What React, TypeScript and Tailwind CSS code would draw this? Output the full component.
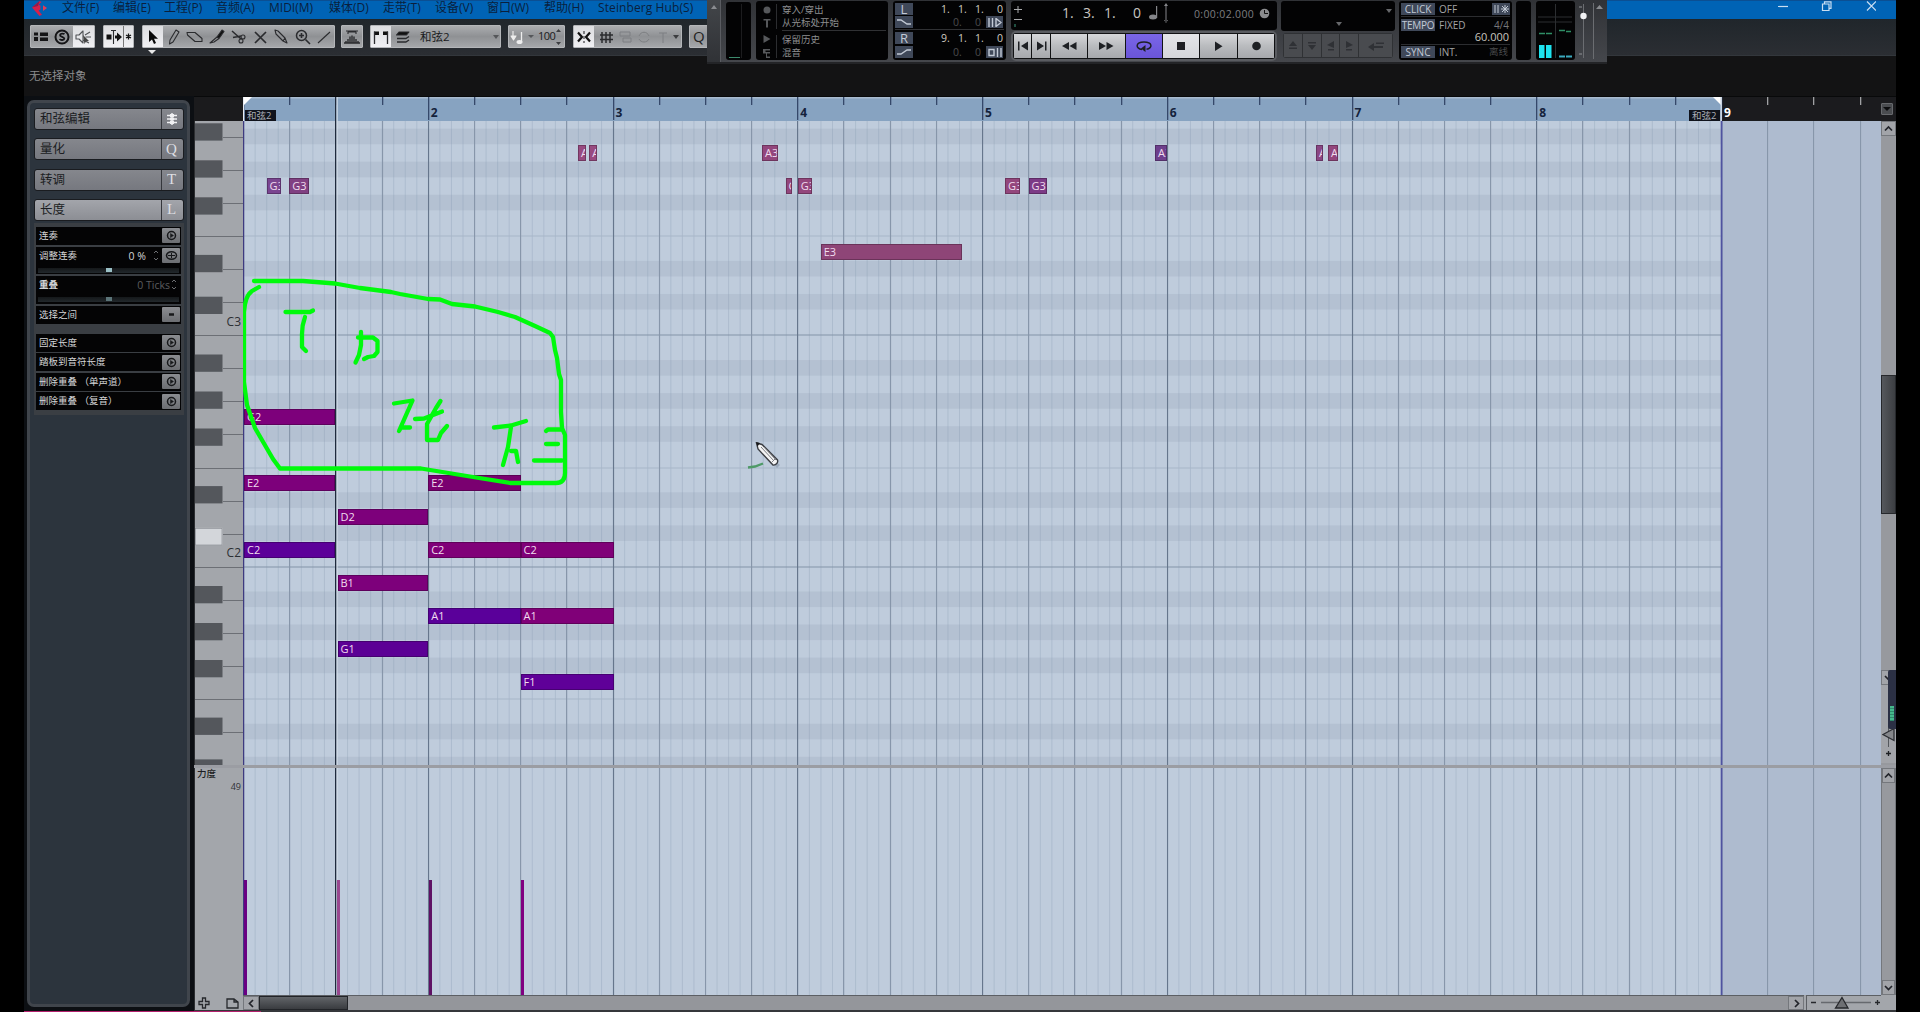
import React from "react";

const UI = "font-['Open_Sans','Noto_Sans_CJK_SC',sans-serif]";

/* ---------- geometry of the editor canvas ---------- */
const ORIGIN = 243;
const BAR = 184.75;
const END = BAR * 8 + 0.5;
const STEP = 33.06;
const TOP = 121;
const B_C_LINE = 335.3;

const DEGREES = ["C", "D", "E", "F", "G", "A", "B"];
const rowCenter = (name: string) => {
  const idx = DEGREES.indexOf(name[0]) + (Number(name[1]) - 3) * 7;
  return B_C_LINE - STEP / 2 - idx * STEP - TOP;
};

const quarters = Array.from({ length: 36 }, (_, i) => i);
const sixteenths = Array.from({ length: 128 }, (_, i) => i);

type Note = { p: string; x: number; e: number; c: string; t?: string };
const faded = "#93467c";
const notes: Note[] = [
  { p: "G3", x: 266.5, e: 281.3, c: "#7a4590" },
  { p: "G3", x: 289.3, e: 308.7, c: "#804082" },
  { p: "A3", x: 578, e: 585.8, c: "#984a80" },
  { p: "A3", x: 589.3, e: 597.3, c: "#984a80" },
  { p: "A3", x: 762, e: 777.8, c: faded },
  { p: "G3", x: 785.5, e: 792.3, c: faded },
  { p: "G3", x: 797.7, e: 811.8, c: faded },
  { p: "E3", x: 820.7, e: 962, c: "#8e4577" },
  { p: "G3", x: 1005, e: 1019.6, c: faded },
  { p: "G3", x: 1028.5, e: 1047, c: "#7c3a86" },
  { p: "A3", x: 1155, e: 1167, c: "#6e3f8c" },
  { p: "A3", x: 1316, e: 1322.6, c: "#8a4684" },
  { p: "A3", x: 1328, e: 1337.5, c: faded },
  { p: "G2", x: 244, e: 334.6, c: "#7d007b" },
  { p: "E2", x: 244, e: 334.6, c: "#7d007b" },
  { p: "C2", x: 244, e: 334.6, c: "#5c0099" },
  { p: "D2", x: 337.5, e: 428.2, c: "#7d007b" },
  { p: "B1", x: 337.5, e: 428.2, c: "#7d007b" },
  { p: "G1", x: 337.5, e: 428.2, c: "#5c0095" },
  { p: "E2", x: 428.2, e: 521, c: "#7a0070" },
  { p: "C2", x: 428.2, e: 521, c: "#800078" },
  { p: "C2", x: 520.5, e: 613.5, c: "#800078" },
  { p: "A1", x: 428.2, e: 521, c: "#5a009a" },
  { p: "A1", x: 520.5, e: 613.5, c: "#800078" },
  { p: "F1", x: 520.5, e: 613.5, c: "#5f0098" },
];

const blackRows: number[] = [];
for (let k = -14; k < 7; k++) {
  const d = ((k % 7) + 7) % 7;
  if (d !== 2 && d !== 6) blackRows.push(B_C_LINE - STEP * (k + 1) - TOP);
}

const blackKeys: number[] = [];
[123.3, 354.5, 586].forEach((b) => [0, 37, 74, 131.6, 173.4].forEach((o) => blackKeys.push(b + o - TOP)));
const keyLines = Array.from({ length: 20 }, (_, i) => i - 13).map((k) => ({
  y: B_C_LINE - STEP * k - TOP,
  full: ((k % 7) + 7) % 7 === 0 || ((k % 7) + 7) % 7 === 3,
  c: ((k % 7) + 7) % 7 === 0,
}));

function GridLines({ h, rows }: { h: number; rows?: boolean }) {
  return (
    <svg className="absolute inset-0" width="1638" height={h}>
      <rect width={END} height={h} fill="#bfccdc" />
      <rect x={END} width={1638 - END} height={h} fill="#aebbcf" />
      {rows && blackRows.map((y) => <rect key={y} x="0" y={y - 8.3} width={END} height="15.6" fill="#b4c1d2" />)}
      {sixteenths.map((i) => (
        <rect key={i} x={(BAR / 16) * i + 0.1} width="1" height={h} fill="#8497ae" opacity="0.3" />
      ))}
      {rows &&
        keyLines
          .filter((l) => l.full)
          .map((l) => <rect key={l.y} y={Math.round(l.y) - 0.5} width={END} height="1" fill={l.c ? "#8393a8" : "#a8b6c8"} />)}
      {quarters.map((i) => (
        <rect
          key={i}
          x={Math.round((BAR / 4) * i)}
          width={1.1}
          height={h}
          fill={i % 4 === 0 ? "#66768c" : "#8796aa"}
        />
      ))}
      <rect x="0" width="1.2" height={h} fill="#3d3a80" />
      <rect x={END - 0.8} width="1.8" height={h} fill="#4f53a0" />
      <rect x="92" width="1.4" height={h} fill="#1e2a3c" />
      <rect x="93.6" width="1" height={h} fill="#d6e0ea" />
    </svg>
  );
}

/* ---------- menu & tool bar ---------- */
const menu: [string, string][] = [
  ["文件(F)", "w-[51px]"],
  ["编辑(E)", "w-[51px]"],
  ["工程(P)", "w-[52px]"],
  ["音频(A)", "w-[53px]"],
  ["MIDI(M)", "w-[60px]"],
  ["媒体(D)", "w-[54px]"],
  ["走带(T)", "w-[52px]"],
  ["设备(V)", "w-[52px]"],
  ["窗口(W)", "w-[57px]"],
  ["帮助(H)", "w-[54px]"],
  ["Steinberg Hub(S)", "w-[110px] tracking-[0.1px]"],
];

function TitleBar() {
  return (
    <div className="flex h-[19px] items-start border-t border-[#0b4f93] bg-[#0063b5] text-[12px] leading-[14px] text-[#0a1f3d]">
      <div className="w-[38px] pl-[8px]">
        <svg width="16" height="16" viewBox="0 0 16 16">
          <path d="M7.5 0 0 6.500 7.500 15l2.500-1.200L6.600 9.500l1.800-1V4.600L6.600 3.800 9.500 1z" fill="#d6204a" />
          <path d="m11 4.200 4 2.800-4 3z" fill="#e23b55" />
          <path d="M0 6.500 7.500 0 6 5z" fill="#8e1c4c" />
        </svg>
      </div>
      {menu.map(([t, w]) => (
        <span key={t} className={`${w} shrink-0 whitespace-nowrap`}>
          {t}
        </span>
      ))}
      <div className="ml-auto flex items-center pr-[20px]">
        <svg width="102" height="13" fill="none" stroke="#c9def2" strokeWidth="1.2">
          <path d="M4 5.500h10" />
          <path d="M48.500 3h6.500v6.500h-6.500zM50.500 3V.8h6.500v6.500h-2" />
          <path d="m93 .5 9 9m0-9-9 9" />
        </svg>
      </div>
    </div>
  );
}

const groupCls = "flex h-[23px] shrink-0 items-center rounded-[1px] border border-[#b4b6b9] bg-gradient-to-b from-[#aaacaf] via-[#8f9194] to-[#a5a7aa]";
const litCls = "flex h-full items-center justify-center bg-gradient-to-b from-[#dcdde0] to-[#f0f0f3]";

function Cell({ lit, w = "w-[21.5px]", children }: { lit?: boolean; w?: string; children?: React.ReactNode }) {
  return <div className={`${w} shrink-0 ${lit ? litCls : "flex h-full items-center justify-center"}`}>{children}</div>;
}

function Ico({ children, w = 18, h = 18 }: { children: React.ReactNode; w?: number; h?: number }) {
  return (
    <svg width={w} height={h} viewBox={`0 0 ${w} ${h}`} fill="none" stroke="#2a2b2e" strokeWidth="1.1" strokeLinejoin="round" className="shrink-0">
      {children}
    </svg>
  );
}

function ToolBar() {
  return (
    <div className="flex h-[37px] items-start border-b border-[#33373c] bg-gradient-to-b from-[#20262b] to-[#2b2e33] pl-[6px] pt-[6px]">
      <div className={`${groupCls} w-[65px]`}>
        <Cell w="w-[20px]">
          <Ico>
            <path d="M2 4.500h4v3H2zM2 9h4v4H2zM8 4.500h8v3.500H8zM8 9.500h8V13H8z" fill="#141416" stroke="none" />
          </Ico>
        </Cell>
        <Cell>
          <Ico>
            <circle cx="9" cy="9" r="6.500" stroke="#141416" strokeWidth="2" />
            <path d="M11.500 6.200c-1-.9-4.300-1-4.500.8-.1 2 4.300 1.600 4.300 3.600-.2 1.800-3.700 1.700-4.800.6" stroke="#141416" strokeWidth="1.800" />
          </Ico>
        </Cell>
        <Cell lit>
          <Ico>
            <path d="M2 7h3l4-4v12l-4-4H2zM11 7l5-3M11.500 9H17M9 12l6 3" stroke="#515357" />
            <path d="m9 7 6 6-3 .4L10.500 16z" fill="#444" stroke="none" />
          </Ico>
        </Cell>
      </div>
      <div className={`${groupCls} ml-[8px] w-[31px] overflow-hidden`}>
        <Cell lit w="w-[19px]">
          <Ico>
            <path d="M1.500 6.500h5v5h-5zM10 7.500h2V4.500l5 4.500-5 4.500v-3h-2z" fill="#111" stroke="none" />
            <path d="M8.500 2v14M6 2.500h5" />
          </Ico>
        </Cell>
        <div className="h-full w-px bg-[#777]" />
        <Cell lit w="w-[9px]">
          <svg width="7" height="7" stroke="#111" strokeWidth="1.300">
            <path d="M3.500.5v6M1 2l5 3M6 2 1 5" />
          </svg>
        </Cell>
      </div>
      <div className={`${groupCls} relative ml-[8px] w-[193px]`}>
        <Cell lit w="w-[20px]">
          <Ico>
            <path d="M5 2v12l3-2.500L10 16l2-1-2-4.300h4z" fill="#0a0a0a" stroke="none" />
          </Ico>
        </Cell>
        <Cell>
          <Ico>
            <path d="m5 12 6-10 3 2-6 10-3.500 2z" />
          </Ico>
        </Cell>
        <Cell>
          <Ico>
            <path d="M1 4.500h8l7 6v3H9L1.500 7z" />
          </Ico>
        </Cell>
        <Cell>
          <Ico>
            <path d="m9 9 5-7 2 1.500-5 7z" fill="#111" />
            <path d="M9 9 2 15l4-1 5-3.500" />
          </Ico>
        </Cell>
        <Cell>
          <Ico>
            <path d="m3 3 9 8M4 9.500 12 8" strokeWidth="1.500" />
            <circle cx="14" cy="9" r="2" />
            <circle cx="12" cy="13" r="2" />
          </Ico>
        </Cell>
        <Cell>
          <Ico>
            <path d="m4 4 11 11M15 4 4 15" strokeWidth="1.700" />
          </Ico>
        </Cell>
        <Cell>
          <Ico>
            <path d="m3 2 3 1 7 7-2 3-7-7zM11 13l4 2-2-5" />
          </Ico>
        </Cell>
        <Cell>
          <Ico>
            <circle cx="7.500" cy="7.500" r="5" strokeWidth="1.500" />
            <path d="M5 7.500h5M7.500 5v5M11.500 11.500 16 16" strokeWidth="1.600" />
          </Ico>
        </Cell>
        <Cell w="w-[20px]">
          <Ico>
            <path d="M3 15 15 4" />
          </Ico>
        </Cell>
        <div className="absolute left-[5px] top-[24px] h-0 w-0 border-x-[4px] border-t-[4px] border-x-transparent border-t-[#e8e8e8]" />
      </div>
      <div className={`${groupCls} ml-[6px] w-[22px]`}>
        <Ico w={20} h={18}>
          <path d="M4 3h12M6 6V4h8v2" />
          <path d="M2 15h16M4 15v-2M6 15v-4M8 15V8.500M10 15V7.500M12 15V8.500M14 15v-4M16 15v-2" strokeWidth="1.400" />
        </Ico>
      </div>
      <div className={`${groupCls} ml-[7px] w-[131px]`}>
        <Cell lit w="w-[20px]">
          <Ico>
            <path d="M2 3.500h5v3.500H2zm9 0h5v3.500h-5z" fill="#111" stroke="none" />
            <path d="M2.500 3.500V16M15.500 3.500V16" strokeWidth="1.300" />
          </Ico>
        </Cell>
        <Cell w="w-[23px]">
          <Ico>
            <path d="M5 4h10l-2.500 3H2.500z" fill="#111" />
            <path d="M3 10.500h9l3-2M3 14h9l3-2" strokeWidth="1.500" />
          </Ico>
        </Cell>
        <span className="pl-[6px] text-[11.5px] text-[#1a1b1d]">和弦2</span>
        <div className="ml-auto mr-px h-0 w-0 border-x-[3px] border-t-[4px] border-x-transparent border-t-[#55575a]" />
      </div>
      <div className={`${groupCls} ml-[7px] w-[57px]`}>
        <Ico w={18} h={18}>
          <path d="M4 3v7M2 8l2.500 4L7 8z" stroke="#eee" fill="#eee" />
          <path d="M12.500 4v10" stroke="#eee" strokeWidth="1.300" />
          <ellipse cx="10.500" cy="14" rx="3" ry="2" fill="#eee" stroke="none" />
        </Ico>
        <div className="ml-px h-0 w-0 border-x-[3px] border-t-[3px] border-x-transparent border-t-[#55575a]" />
        <span className="ml-[4px] text-[11px] tracking-[-0.5px] text-[#1a1b1d]">100</span>
        <svg width="5" height="18" className="ml-px shrink-0" fill="#3c3d40">
          <path d="M0 4h5L2.500 1zM0 14h5l-2.500 3z" />
        </svg>
      </div>
      <div className={`${groupCls} ml-[8px] w-[109px]`}>
        <Cell lit w="w-[20px]">
          <Ico>
            <path d="m3 4.500 4 4.500-4 4.500M15 4.500 11 9l4 4.500" strokeWidth="2.200" stroke="#111" />
            <path d="M9 3v12" strokeDasharray="3 2" />
          </Ico>
        </Cell>
        <Cell w="w-[24px]">
          <Ico>
            <path d="M5 4v11M9 4v11M13 4v11M3 7h13M3 11.500h13" strokeWidth="1.500" />
          </Ico>
        </Cell>
        <svg width="50" height="18" fill="none" stroke="#7d7f82">
          <path d="M2 4h10v4H2zM5 10h8v4H5zM21 8c2-5 8-5 10 0M31 11c-2 4-8 4-10 0M41 5h8M45 5v10" />
        </svg>
        <div className="ml-auto mr-[2px] h-0 w-0 border-x-[3px] border-t-[4px] border-x-transparent border-t-[#3c3d40]" />
      </div>
      <div className={`${groupCls} ml-[7px] w-[22px] pl-[3px] text-[15px] leading-none text-[#222]`}>Q</div>
    </div>
  );
}

/* ---------- floating transport ---------- */
const well = "rounded-[3px] bg-[#030304]";
const tag = "flex items-center justify-center bg-[#3f4859] text-[#c3cad6]";

function Digits({ v, dim, children }: { v: string[]; dim?: boolean; children?: React.ReactNode }) {
  return (
    <div className={`flex flex-1 items-center justify-end text-[10.5px] leading-[12px] ${dim ? "pr-px text-[#4b4c4e]" : "pr-px text-[#d0ccc2]"}`}>
      {v.map((d, i) => (
        <span key={i} className={i === v.length - 1 ? "ml-[5px]" : "w-[17px]"}>
          {d}
        </span>
      ))}
      {children}
    </div>
  );
}

function TBtn({ w, cls, children }: { w: string; cls?: string; children: React.ReactNode }) {
  return (
    <div className={`${w} flex h-full items-center justify-center ${cls ?? "bg-gradient-to-b from-[#d6d7da] via-[#b9bbbe] to-[#a6a8ac]"}`}>
      <svg width="16" height="16" viewBox="0 0 16 16" fill="#1e2024" className="shrink-0">
        {children}
      </svg>
    </div>
  );
}

function Transport() {
  return (
    <div className="absolute left-[707px] top-0 flex h-[64px] w-[900px] border-b-2 border-[#232427] bg-gradient-to-b from-[#303236] to-[#45474c]">
      <div className="flex h-full w-[14px] justify-center border-r border-[#5a5c61] bg-gradient-to-b from-[#43464a] to-[#303236] pt-[5px]">
        <div className="h-0 w-0 border-x-[3px] border-b-[4px] border-x-transparent border-b-[#8a8c90]" />
      </div>
      <div className={`${well} ml-[5px] mt-[2px] flex h-[58px] w-[25px] items-end p-[2px]`}>
        <div className="mb-0 ml-px h-px w-[11px] bg-[#3c8a6c]" />
        <div className="ml-[1px] h-full w-px bg-[#1c1c1e]" />
      </div>
      <div className={`${well} ml-[5px] mt-[1px] flex h-[59px] w-[132px] text-[9.5px] leading-[13px] text-[#8d8e90]`}>
        <svg width="21" height="59" fill="#56585b">
          <circle cx="11" cy="9" r="3.500" />
          <path d="M7.500 18h7v1.500h-2.500v7h-2v-7h-2.500z M7.500 34l7 4-7 4zM7 48h7v1.500H9.500V51H14v1.500h-3v3h3V57h-4v-4.500H7z" />
          <path d="M20.500 3v25M20.500 34v23" stroke="#2c2d30" />
        </svg>
        <div className="flex flex-1 flex-col pl-[5px] pt-[2px]">
          <span>穿入/穿出</span>
          <span>从光标处开始</span>
          <div className="mb-[2px] mt-px h-px w-[104px] bg-[#303134]" />
          <span>保留历史</span>
          <span>混音</span>
        </div>
      </div>
      <div className={`${well} ml-[5px] mt-[1px] flex h-[59px] w-[113px] flex-col px-[2px] pt-[2px]`}>
        <div className="flex h-[12px]">
          <div className={`${tag} w-[18px] text-[13px] leading-none`}>L</div>
          <Digits v={["1.", "1.", "1.", "0"]} />
        </div>
        <div className="mt-[1px] flex h-[12px]">
          <div className={`${tag} w-[18px]`}>
            <svg width="14" height="8" fill="none" stroke="#c3cad6" strokeWidth="1.300">
              <path d="M0 2h4l6 4h4" />
            </svg>
          </div>
          <Digits v={["0.", "0"]} dim>
            <div className="ml-[5px] flex h-[12px] w-[17px] items-center justify-center bg-[#3f4859]">
              <svg width="14" height="9" fill="none" stroke="#c3cad6" strokeWidth="1.400">
                <path d="M1 0v9M4.500 0v9M8 .5v8l5-4z" />
              </svg>
            </div>
          </Digits>
        </div>
        <div className="my-[1px] h-px bg-[#303134]" />
        <div className="mt-[1px] flex h-[12px]">
          <div className={`${tag} w-[18px] text-[13px] leading-none`}>R</div>
          <Digits v={["9.", "1.", "1.", "0"]} />
        </div>
        <div className="mt-[2px] flex h-[12px]">
          <div className={`${tag} w-[18px]`}>
            <svg width="14" height="8" fill="none" stroke="#c3cad6" strokeWidth="1.300">
              <path d="M0 6h4l6-4h4" />
            </svg>
          </div>
          <Digits v={["0.", "0"]} dim>
            <div className="ml-[5px] flex h-[12px] w-[17px] items-center justify-center bg-[#3f4859]">
              <svg width="14" height="9" fill="none" stroke="#c3cad6" strokeWidth="1.400">
                <path d="M1 1.500h5v6H1zM9.500 0v9M13 0v9" />
              </svg>
            </div>
          </Digits>
        </div>
      </div>
      <div className="ml-[5px] mt-[1px] flex w-[266px] flex-col">
        <div className={`${well} flex h-[29px] items-start text-[#c9c7c2]`}>
          <svg width="14" height="29" stroke="#a9aaac" fill="none">
            <path d="M3 8.500h8M7 5v7M3 18.500h8" />
            <path d="M4 23v3" stroke="#3c9a7c" />
          </svg>
          <div className="flex pl-[37px] pt-[3px] text-[14px] leading-[18px]">
            <span className="w-[21px]">1.</span>
            <span className="w-[21px]">3.</span>
            <span className="w-[29px]">1.</span>
            <span>0</span>
          </div>
          <svg width="24" height="24" className="ml-[7px] shrink-0" fill="#85868a">
            <ellipse cx="5" cy="16" rx="4" ry="2.500" />
            <path d="M8 5h1.200v12H8zM17.500 3v18h1V3zM16 5h4l-2-3zM16 19h4l-2 3z" />
          </svg>
          <span className="ml-[22px] pt-[6px] text-[10.5px] leading-[14px] tracking-[0.35px] text-[#7d7e80]">0:00:02.000</span>
          <svg width="11" height="11" className="ml-[5px] mt-[7px] shrink-0">
            <circle cx="5.500" cy="5.500" r="4.800" fill="#8b8c8e" />
            <path d="M5.500 2v3.500H9" stroke="#111" fill="none" />
          </svg>
        </div>
        <div className="mt-[1px] flex h-[30px] items-center gap-px rounded-[5px] border-2 border-[#5a5c61] bg-[#111214] p-[1px]">
          <TBtn w="w-[17px]">
            <path d="M3 3.500h1.500v9H3zM13 3.500v9L6 8z" />
          </TBtn>
          <TBtn w="w-[18px]">
            <path d="M12 3.500h1.500v9H12zM4 3.500v9L11 8z" />
          </TBtn>
          <TBtn w="flex-1">
            <path d="M8 4v8L1 8zM15.500 4v8l-7-4z" />
          </TBtn>
          <TBtn w="flex-1">
            <path d="M1 4v8l7-4zM8.500 4v8l7-4z" />
          </TBtn>
          <TBtn w="flex-1" cls="bg-gradient-to-b from-[#7a66e8] to-[#6a55d8]">
            <path d="M6 11.500C-1 10.500-.5 4 8 4s9 6 2.500 7.300" fill="none" stroke="#1e2024" strokeWidth="1.500" />
            <path d="M9.500 7v7L5 10.500z" />
          </TBtn>
          <TBtn w="flex-1" cls="bg-gradient-to-b from-[#e4e5e8] to-[#d5d6da]">
            <path d="M4 4h8v8H4z" />
          </TBtn>
          <TBtn w="flex-1">
            <path d="M5 3.500v9.500l7.500-4.700z" />
          </TBtn>
          <TBtn w="flex-1">
            <circle cx="8.500" cy="8" r="4.300" />
          </TBtn>
        </div>
      </div>
      <div className="ml-[4px] mt-[1px] flex w-[114px] flex-col">
        <div className={`${well} relative h-[30px]`}>
          <div className="absolute left-[55px] top-[21px] h-0 w-0 border-x-[3px] border-t-[4px] border-x-transparent border-t-[#66686b]" />
          <div className="absolute left-[105px] top-[8px] h-0 w-0 border-x-[3px] border-t-[4px] border-x-transparent border-t-[#66686b]" />
        </div>
        <div className="ml-[2px] mt-[2px] flex h-[25px] w-[110px] gap-px rounded-[3px] bg-[#2f3134] p-px">
          <TBtn w="w-[18px]" cls="bg-[#494b4f]">
            <path d="M4 8h8L8 3zM4 9.500h8V11H4z" opacity=".6" />
          </TBtn>
          <TBtn w="w-[18px]" cls="bg-[#494b4f]">
            <path d="M4 4h8v1.500H4zM4 7h8l-4 5z" opacity=".6" />
          </TBtn>
          <TBtn w="w-[18px]" cls="bg-[#494b4f]">
            <path d="M11 3v7L4 7zM5 11h6v1.500H5z" opacity=".6" />
          </TBtn>
          <TBtn w="w-[18px]" cls="bg-[#494b4f]">
            <path d="M5 3v7l7-3zM5 11h6v1.500H5z" opacity=".6" />
          </TBtn>
          <TBtn w="w-[33px]" cls="bg-[#494b4f]">
            <path d="M0 9l6-4v3h9v2H6v3zM8 4.500h8V6H8z" opacity=".6" />
          </TBtn>
        </div>
      </div>
      <div className={`${well} ml-[4px] mt-[1px] flex h-[59px] w-[113px] flex-col px-[2px] pt-[1px] text-[10px] leading-[12px] text-[#a3a4a6]`}>
        <div className="flex h-[13px] items-center">
          <div className={`${tag} h-[12px] w-[34px]`}>CLICK</div>
          <span className="pl-[4px]">OFF</span>
          <div className="ml-auto flex h-[12px] w-[18px] items-center justify-center bg-[#3f4859]">
            <svg width="16" height="10" stroke="#c3cad6" fill="#c3cad6">
              <path d="M2 1v8M5 1v8M8 5h8M12 1v8M9 2l6 6M15 2 9 8" />
            </svg>
          </div>
        </div>
        <div className="mt-px h-px bg-[#2c2d30]" />
        <div className="mt-px flex h-[13px] items-center">
          <div className={`${tag} h-[12px] w-[34px] tracking-[-0.3px]`}>TEMPO</div>
          <span className="pl-[4px]">FIXED</span>
          <span className="ml-auto pr-[1px] text-[#77787a]">4/4</span>
        </div>
        <div className="h-[12px] pr-[1px] text-right text-[11px] leading-[11px] text-[#c6c4be]">60.000</div>
        <div className="mt-px h-px bg-[#2c2d30]" />
        <div className="mt-px flex h-[12px] items-center">
          <div className={`${tag} h-[12px] w-[34px]`}>SYNC</div>
          <span className="pl-[4px]">INT.</span>
          <span className="ml-auto pr-[2px] text-[9.500px] text-[#48494b]">离线</span>
        </div>
      </div>
      <div className={`${well} ml-[4px] mt-[1px] h-[59px] w-[15px]`} />
      <div className={`${well} ml-[5px] mt-[1px] h-[59px] w-[39px]`}>
        <svg width="39" height="59">
          <path d="M19.500 3v54M2 16h34M2 21h34" stroke="#2c2e31" />
          <path d="M3 32.500h6M10 32.500h6M23 29.500h6M30 30.500h5" stroke="#2f8f66" strokeWidth="1.500" />
          <path d="M3 44h5.500v13H3zM10 44h5.500v13H10z" fill="#1ee3ef" />
          <path d="M23 55.500h6M30 55.500h6" stroke="#3aa9bd" strokeWidth="2" />
        </svg>
      </div>
      <svg width="32" height="62" className="shrink-0">
        <path d="M8.500 4v54M18.500 3v56" stroke="#6b6d71" />
        <path d="M4 7h3M4 54h3" stroke="#909296" />
        <circle cx="8.500" cy="16" r="3.200" fill="#f2f2f4" />
        <path d="M21 9h7l-3.500-4z" fill="#8a8c90" />
      </svg>
    </div>
  );
}

/* ---------- inspector ---------- */
function Header({ t, active, children }: { t: string; active?: boolean; children: React.ReactNode }) {
  return (
    <div
      className={`flex h-[22px] items-center rounded-[3px] border border-[#1a1c20] bg-gradient-to-b ${
        active ? "from-[#a3a5ab] to-[#8c8e94]" : "from-[#85878d] to-[#76787f]"
      }`}
    >
      <span className="flex-1 pl-[5px] text-[12.5px] leading-[20px] text-[#1b1d22]">{t}</span>
      <div className="flex h-full w-[22px] items-center justify-center border-l border-[#35373c] pr-[2px] font-['Liberation_Serif'] text-[15px] leading-none text-[#dedfe3]">
        {children}
      </div>
    </div>
  );
}

const SquareBtn = ({ kind }: { kind: "play" | "eye" | "minus" }) => (
  <div className="ml-auto flex h-[15px] w-[18px] items-center justify-center rounded-[1px] bg-gradient-to-b from-[#8b8d91] to-[#6c6e72]">
    <svg width="13" height="11" fill="none" stroke="#17181a" strokeWidth="1.500">
      {kind === "play" && (
        <>
          <circle cx="6.500" cy="5.500" r="4" />
          <path d="M5.500 3.500v4l3-2z" fill="#17181a" strokeWidth=".5" />
        </>
      )}
      {kind === "eye" && (
        <>
          <ellipse cx="6.500" cy="5.500" rx="5" ry="3.800" />
          <path d="M3 5.500h7M6.500 3v5" strokeWidth="1" />
        </>
      )}
      {kind === "minus" && <path d="M4 5.500h5" strokeWidth="2.500" />}
    </svg>
  </div>
);

function Slider({ dim }: { dim?: boolean }) {
  return (
    <div className="mx-[2px] mt-[3px] flex h-[5px] items-center justify-center bg-[linear-gradient(#15181a,#22282c)]">
      <div className={`h-[4px] w-[6px] ${dim ? "bg-[#5b7478]" : "bg-[#9bc0c6]"}`} />
    </div>
  );
}

const Spin = () => (
  <svg width="6" height="13" fill="none" stroke="#6d6f72" className="mr-[3px] shrink-0">
    <path d="M1 4l2-2 2 2M1 9l2 2 2-2" />
  </svg>
);

const rowCls = "flex items-center bg-[#040405] pl-[3px] pr-[1px] text-[9.500px] leading-[14px] text-[#d4d5d7]";

function Inspector() {
  return (
    <div className="h-[916px] w-[170px] bg-[#0c0f13] pl-[3px] pt-[4px]">
      <div className="h-[907px] w-[163px] rounded-[7px] border-[3px] border-[#40454c] bg-[#2c343d] pl-[4px] pr-[3px] pt-[5px]">
        <div className="flex flex-col gap-[8.300px]">
          <Header t="和弦编辑">
            <svg width="12" height="14" stroke="#f0f0f2" strokeWidth="1.500">
              <path d="M1 3.500h10M1 7h10M1 10.500h10M6 1v12" />
              <path d="M4 3.500h4M4 7h4M4 10.500h4" strokeWidth="3" />
            </svg>
          </Header>
          <Header t="量化">Q</Header>
          <Header t="转调">T</Header>
          <Header t="长度" active>
            L
          </Header>
        </div>
        <div className="mt-[2px] h-[192px] bg-[#3a3e43] pl-[2px] pr-[3px] pt-[4px]">
          <div className="flex flex-col gap-[2px]">
            <div className={`${rowCls} h-[18px]`}>
              连奏
              <SquareBtn kind="play" />
            </div>
            <div className="h-[27px] bg-[#040405]">
              <div className={`${rowCls} h-[18px]`}>
                <span className="flex-1">调整连奏</span>
                <span className="mr-[7px] text-[10.500px]">0 %</span>
                <Spin />
                <div>
                  <SquareBtn kind="eye" />
                </div>
              </div>
              <Slider />
            </div>
            <div className="h-[28px] bg-[#040405]">
              <div className={`${rowCls} h-[18px]`}>
                <span className="flex-1 font-bold">重叠</span>
                <span className="mr-px text-[10.500px] text-[#5b5c5f]">0 Ticks</span>
                <Spin />
              </div>
              <Slider dim />
            </div>
            <div className={`${rowCls} h-[18px]`}>
              选择之间
              <SquareBtn kind="minus" />
            </div>
          </div>
          <div className="mt-[10px] flex flex-col gap-[1.500px]">
            {["固定长度", "踏板到音符长度", "删除重叠 （单声道）", "删除重叠 （复音）"].map((t) => (
              <div key={t} className={`${rowCls} h-[18px]`}>
                {t}
                <SquareBtn kind="play" />
              </div>
            ))}
          </div>
        </div>
      </div>
    </div>
  );
}

/* ---------- editor ---------- */
function Ruler() {
  return (
    <div className="flex h-[25px] border-t border-[#08090a]">
      <div className="w-[49px] bg-[#1b1b1d]" />
      <div className="relative w-[1638px] overflow-hidden bg-[#1b1b1e]">
        <svg className="absolute inset-0" width="1638" height="24">
          <rect width={END} height="24" fill="#87a3c1" />
          <rect width={END} height="1.500" fill="#a9bbcf" />
          {quarters.map((i) => (
            <rect
              key={i}
              x={Math.round((BAR / 4) * i)}
              width="1.300"
              height={i % 4 === 0 ? 23 : 8}
              fill={i > 32 ? "#a0a1a4" : "#35486a"}
            />
          ))}
          <path d="M1 0h8L1 8zM1478 0h-8l8 8z" fill="#fff" />
          <rect x="92" width="1.400" height="24" fill="#1e2a3c" />
          <rect x="93.500" width="1.200" height="24" fill="#d6e0ea" />
          <rect x="0" width="1" height="24" fill="#e8edf3" />
          <rect x="1477.500" width="1.500" height="24" fill="#c9d3e0" />
        </svg>
        {[2, 3, 4, 5, 6, 7, 8, 9].map((n) => (
          <span
            key={n}
            className={`absolute top-[9px] text-[12px] font-bold leading-[14px] ${n === 9 ? "text-white" : "text-[#14223c]"}`}
            style={{ left: BAR * (n - 1) + 3 }}
          >
            {n}
          </span>
        ))}
        <span className="absolute left-[2px] top-[13px] h-[11px] w-[31px] bg-[#10131c] pl-[2px] text-[9.500px] leading-[11px] text-[#a9adb6]">和弦2</span>
        <span className="absolute left-[1446px] top-[13px] h-[11px] w-[31px] bg-[#10131c] pl-[3px] text-[9.500px] leading-[11px] text-[#a9adb6]">和弦2</span>
      </div>
      <div className="flex w-[15px] items-center bg-[#1b1b1e]">
        <div className="flex h-[12px] w-[12px] items-center justify-center rounded-[1px] border border-[#67696d] bg-[#4a4c50]">
          <div className="h-0 w-0 border-x-[4px] border-t-[4px] border-x-transparent border-t-[#0c0c0e]" />
        </div>
      </div>
    </div>
  );
}

function Keyboard() {
  return (
    <div className="relative h-[644px] w-[49px] overflow-hidden border-l border-[#2c2e31] bg-[#a3a6ab]">
      <svg className="absolute inset-0" width="48" height="644">
        {keyLines.map((l) => (
          <rect key={l.y} x={l.full ? 0 : 28} y={Math.round(l.y)} width="48" height="1" fill="#6c6f75" />
        ))}
        {blackKeys.map((y, i) => (
          <rect key={y} x="0" y={y} width="27.500" height="17.300" fill={i === 9 ? "#d3d6da" : "#54575c"} />
        ))}
        <rect x=".5" y="407.500" width="26.500" height="16.500" fill="none" stroke="#80838a" strokeWidth=".6" />
      </svg>
      <span className="absolute right-[2px] top-[193px] text-[12px] leading-[16px] text-[#2c2f34]">C3</span>
      <span className="absolute right-[2px] top-[424px] text-[12px] leading-[16px] text-[#2c2f34]">C2</span>
    </div>
  );
}

const ArrowBtn = ({ d, size = "h-[15px] w-[15px]" }: { d: string; size?: string }) => (
  <div className={`${size} flex shrink-0 items-center justify-center border border-[#74777c] bg-[#a2a4a9]`}>
    <svg width="9" height="9" fill="none" stroke="#22242a" strokeWidth="1.700">
      <path d={d} />
    </svg>
  </div>
);
const UP = "M1 6.500 4.500 3 8 6.500";
const DOWN = "M1 3 4.500 6.500 8 3";

const strokes = [
  "M254 281 303 281 335 283.500 360 288 391 292 400 294 428 299 440 299.500 452 304 475 306.500 498 312 515 317 535 326 550 333 553 337 555 350 557 358 559 374 561 380V412L562 428 565 435V473Q565 483 556 483H510L473 477 421 468.500H280L273 459 255 428 247 405 244 382V312Q245 296 252 291L259 287",
  "M285.500 312H310L313 310.500M305 317Q302 325 302 334V347L306 351",
  "M361 332V345L359 355 355.500 362.500M358 337.500H373L377.500 341V352L374 356 368 357 364 359",
  "M394 403.500 412.500 400.500 399 431 401 427.500H410",
  "M415 419 424 418.500 442 411.500M440.500 401 436 408 427 424 427 440H438L441 433 447 426",
  "M494 427.500 511 425.500 526 421M511 427 508 447 503 465M511 451 516 451 518 462",
  "M546 431 548 429.500H561M546 444H558M534 460.500H562",
];

function RollCanvas() {
  return (
    <div className="relative h-[644px] w-[1638px] overflow-hidden">
      <GridLines h={644} rows />
      {notes.map((n, i) => (
        <div
          key={i}
          className="absolute h-[16px] overflow-hidden whitespace-nowrap border border-black/25 pl-[2px] text-[11px] leading-[14px] text-[#f0dcee]"
          style={{ left: n.x - ORIGIN, width: n.e - n.x, top: rowCenter(n.p) - 8.6, backgroundColor: n.c }}
        >
          {n.p}
        </div>
      ))}
      <svg className="absolute inset-0" width="1638" height="644" viewBox="243 121 1638 644">
        <g fill="none" stroke="#00fa0c" strokeWidth="4.300" strokeLinecap="round" strokeLinejoin="round">
          {strokes.map((d) => (
            <path key={d} d={d} />
          ))}
        </g>
        <path d="M748 467.500 755 466.500 763 463.500" stroke="#4f9a68" strokeWidth="2.400" fill="none" />
        <path d="m762 450 18 15-3 3z" fill="#7d8ba0" opacity=".5" />
        <path d="m756.500 443 5.500 1.500 15.500 15.500c1 3-2 5.500-4.500 5L758 449z" fill="#f4f4f4" stroke="#3b3d42" strokeWidth="1.400" />
        <path d="m761 447 13 14M764 447 776 460M770.500 463.500l5-5" stroke="#7b7d82" strokeWidth="1" />
        <path d="m756 442 4 1-2.500 3.500z" fill="#17181a" />
      </svg>
    </div>
  );
}

const velocity = [
  { x: 1, c: "#6a0082" },
  { x: 94, c: "#98488f" },
  { x: 185.5, c: "#5e1164" },
  { x: 278, c: "#800080" },
];

function Editor() {
  return (
    <div className="w-[1702px]">
      <Ruler />
      <div className="flex h-[644px]">
        <Keyboard />
        <RollCanvas />
        <div className="relative flex w-[15px] flex-col bg-[#97999e]">
          <ArrowBtn d={UP} />
          <div className="mt-[239px] h-[139px] border border-[#26282c] bg-gradient-to-r from-[#55585d] to-[#3c3e42]" />
          <div className="mt-[156px]">
            <ArrowBtn d={DOWN} />
          </div>
          <div className="relative flex h-[78px] flex-col items-center bg-[#a2a4a9]">
            <div className="h-[62px] w-px bg-[#55585d]" />
            <svg width="7" height="7" className="mt-[3px]" stroke="#1d1f23" strokeWidth="1.300">
              <path d="M3.500 1v5M1 3.500h5" />
            </svg>
            <svg className="absolute left-[1px] top-[42px]" width="14" height="15">
              <path d="M1 7.500 12 1.500v12z" fill="#85878b" stroke="#2c2e33" strokeWidth="1.300" />
            </svg>
          </div>
          <div className="absolute bottom-[36px] right-0 flex h-[59px] w-[8px] items-end rounded-l-[2px] bg-[#2b3044] pb-[8px] pl-[2px]">
            <div className="h-[15px] w-[4px] bg-[repeating-linear-gradient(#45b88c_0_2px,#2f8a6c_2px_3px)]" />
          </div>
        </div>
      </div>
      <div className="h-[3px] bg-[#9b9da3]" />
      <div className="flex h-[227px]">
        <div className="relative w-[49px] border-l border-[#2c2e31] bg-[#a3a6ab]">
          <span className="absolute left-[2px] top-0 text-[9.500px] font-medium leading-[12px] text-[#1c1e22]">力度</span>
          <span className="absolute right-[2px] top-[13px] text-[9px] leading-[11px] text-[#303338]">49</span>
        </div>
        <div className="relative w-[1638px] overflow-hidden">
          <GridLines h={227} />
          {velocity.map((v) => (
            <div key={v.x} className="absolute bottom-0 h-[115px] w-[3px]" style={{ left: v.x, backgroundColor: v.c }} />
          ))}
        </div>
        <div className="flex w-[15px] flex-col justify-between border-x border-[#74777c] bg-[#97999e]">
          <ArrowBtn d={UP} size="h-[15px] w-[13px]" />
          <ArrowBtn d={DOWN} size="h-[15px] w-[13px]" />
        </div>
      </div>
      <div className="relative flex h-[17px] border-b-2 border-[#35373b] bg-[#a3a6ab]">
        <div className="flex w-[49px] items-center border-l border-[#2c2e31]">
          <svg width="48" height="14" fill="none" stroke="#26282c" strokeWidth="1.300">
            <path d="M7.500 2h3v3.500H14v3h-3.500V12h-3V8.500H4v-3h3.500zM32 3h7l4 3v6H32zM39 3v3h4" />
          </svg>
        </div>
        <div className="flex w-[1561px] border-t border-[#5c5f64] bg-[#94969b]">
          <ArrowBtn d="M6 1 2.500 4.500 6 8" size="h-[14px] w-[16px]" />
          <div className="h-[14px] w-[89px] border border-[#222428] bg-gradient-to-b from-[#626569] to-[#3a3c40]" />
          <div className="ml-auto">
            <ArrowBtn d="M3 1 6.500 4.500 3 8" size="h-[14px] w-[16px]" />
          </div>
        </div>
        <div className="ml-[2px] flex w-[75px] items-center border-l border-t border-[#5c5f64]">
          <svg width="75" height="14" fill="none" stroke="#26282c" strokeWidth="1.300">
            <path d="M4 6.500h5M68 6.500h5M70.500 4v5" />
            <path d="M14 6.500h50" stroke="#66696e" />
            <path d="M35 1.500 41 12H28.500z" fill="#6d6f73" />
          </svg>
        </div>
      </div>
    </div>
  );
}

export default function App() {
  return (
    <div className={`relative h-[1012px] w-[1920px] overflow-hidden bg-black ${UI}`}>
      <div className="ml-[24px] w-[1872px]">
        <TitleBar />
        <ToolBar />
        <div className="flex h-[40px] items-center bg-[#131314] pl-[5px] text-[11.500px] text-[#8b8c8e]">无选择对象</div>
        <div className="flex">
          <Inspector />
          <Editor />
        </div>
      </div>
      <div className="absolute bottom-0 left-[24px] h-px w-[237px] bg-[#b3206c]" />
      <Transport />
    </div>
  );
}
